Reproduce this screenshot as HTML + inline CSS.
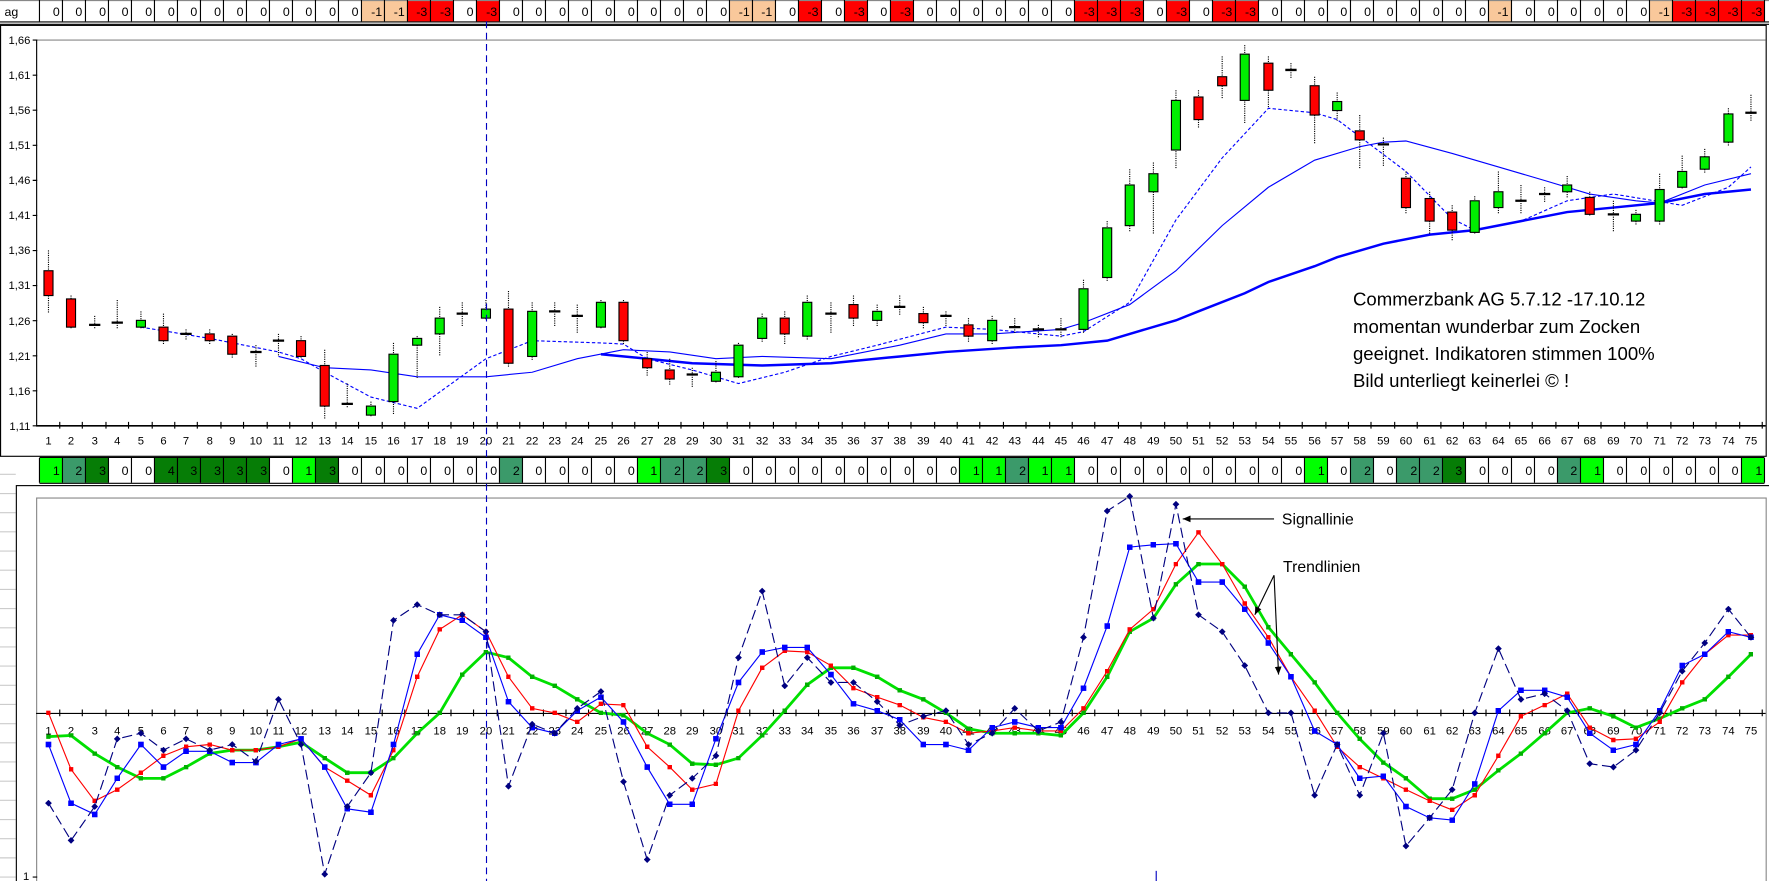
<!DOCTYPE html>
<html><head><meta charset="utf-8"><style>
html,body{margin:0;padding:0;background:#fff;overflow:hidden}
svg{display:block}
text{font-family:"Liberation Sans",Arial,sans-serif}
</style></head><body>
<svg width="1769" height="881" viewBox="0 0 1569 781" preserveAspectRatio="none" xmlns="http://www.w3.org/2000/svg">
<defs>
<marker id="md" markerWidth="6" markerHeight="6" refX="3" refY="3" markerUnits="userSpaceOnUse"><path d="M3 0L6 3L3 6L0 3Z" fill="#000080"/></marker>
<marker id="mb" markerWidth="5" markerHeight="5" refX="2.5" refY="2.5" markerUnits="userSpaceOnUse"><rect width="5" height="5" fill="#0000ff"/></marker>
<marker id="mr" markerWidth="4" markerHeight="4" refX="2" refY="2" markerUnits="userSpaceOnUse"><rect width="4" height="4" fill="#ff0000"/></marker>
<marker id="mg" markerWidth="4" markerHeight="4" refX="2" refY="2" markerUnits="userSpaceOnUse"><rect width="4" height="4" fill="#00b000"/></marker>
<marker id="ah" markerWidth="8" markerHeight="8" refX="7" refY="4" orient="auto" markerUnits="userSpaceOnUse"><path d="M0 1L7 4L0 7Z" fill="#000"/></marker>
</defs>
<rect width="1569" height="781" fill="#fff"/>

<!-- TOP BAR -->
<g font-size="11" text-anchor="end" stroke-width="0">
<rect x="0" y="0" width="1569" height="19" fill="#fff"/>
<text x="4" y="14" text-anchor="start">ag</text>
<g fill="#f9c89b">
<rect x="320.6" y="0" width="40.8" height="19"/><rect x="647" y="0" width="40.8" height="19"/><rect x="1320" y="0" width="20.4" height="19"/><rect x="1463" y="0" width="20.4" height="19"/>
</g>
<g fill="#ff0000">
<rect x="361.4" y="0" width="40.8" height="19"/><rect x="422.6" y="0" width="20.4" height="19"/>
<rect x="708.2" y="0" width="20.4" height="19"/><rect x="749" y="0" width="20.4" height="19"/><rect x="789.8" y="0" width="20.4" height="19"/>
<rect x="953" y="0" width="61.2" height="19"/><rect x="1034.6" y="0" width="20.4" height="19"/><rect x="1075.4" y="0" width="40.8" height="19"/>
<rect x="1483.4" y="0" width="81.6" height="19"/>
</g>
<g stroke="#000" stroke-width="1">
<line x1="0" y1="0.5" x2="1569" y2="0.5" stroke="#888"/>
<line x1="35" y1="0" x2="35" y2="19"/>
<path d="M55.4 0V19M75.8 0V19M96.2 0V19M116.6 0V19M137 0V19M157.4 0V19M177.8 0V19M198.2 0V19M218.6 0V19M239 0V19M259.4 0V19M279.8 0V19M300.2 0V19M320.6 0V19M341 0V19M361.4 0V19M381.8 0V19M402.2 0V19M422.6 0V19M443 0V19M463.4 0V19M483.8 0V19M504.2 0V19M524.6 0V19M545 0V19M565.4 0V19M585.8 0V19M606.2 0V19M626.6 0V19M647 0V19M667.4 0V19M687.8 0V19M708.2 0V19M728.6 0V19M749 0V19M769.4 0V19M789.8 0V19M810.2 0V19M830.6 0V19M851 0V19M871.4 0V19M891.8 0V19M912.2 0V19M932.6 0V19M953 0V19M973.4 0V19M993.8 0V19M1014.2 0V19M1034.6 0V19M1055 0V19M1075.4 0V19M1095.8 0V19M1116.2 0V19M1136.6 0V19M1157 0V19M1177.4 0V19M1197.8 0V19M1218.2 0V19M1238.6 0V19M1259 0V19M1279.4 0V19M1299.8 0V19M1320.2 0V19M1340.6 0V19M1361 0V19M1381.4 0V19M1401.8 0V19M1422.2 0V19M1442.6 0V19M1463 0V19M1483.4 0V19M1503.8 0V19M1524.2 0V19M1544.6 0V19M1565 0V19"/>
<line x1="0" y1="19.5" x2="1569" y2="19.5"/><line x1="0" y1="21.5" x2="1569" y2="21.5"/>
</g>
<g fill="#000">
<text x="53" y="14">0</text><text x="73" y="14">0</text><text x="94" y="14">0</text><text x="114" y="14">0</text><text x="135" y="14">0</text><text x="155" y="14">0</text><text x="175" y="14">0</text><text x="196" y="14">0</text><text x="216" y="14">0</text><text x="237" y="14">0</text><text x="257" y="14">0</text><text x="277" y="14">0</text><text x="298" y="14">0</text><text x="318" y="14">0</text>
<text x="339" y="14">-1</text><text x="359" y="14">-1</text><text x="379" y="14">-3</text><text x="400" y="14">-3</text><text x="420" y="14">0</text><text x="441" y="14">-3</text>
<text x="461" y="14">0</text><text x="481" y="14">0</text><text x="502" y="14">0</text><text x="522" y="14">0</text><text x="543" y="14">0</text><text x="563" y="14">0</text><text x="583" y="14">0</text><text x="604" y="14">0</text><text x="624" y="14">0</text><text x="645" y="14">0</text>
<text x="665" y="14">-1</text><text x="685" y="14">-1</text><text x="706" y="14">0</text><text x="726" y="14">-3</text><text x="747" y="14">0</text><text x="767" y="14">-3</text><text x="787" y="14">0</text><text x="808" y="14">-3</text>
<text x="828" y="14">0</text><text x="849" y="14">0</text><text x="869" y="14">0</text><text x="889" y="14">0</text><text x="910" y="14">0</text><text x="930" y="14">0</text><text x="951" y="14">0</text>
<text x="971" y="14">-3</text><text x="991" y="14">-3</text><text x="1012" y="14">-3</text><text x="1032" y="14">0</text><text x="1053" y="14">-3</text><text x="1073" y="14">0</text><text x="1093" y="14">-3</text><text x="1114" y="14">-3</text>
<text x="1134" y="14">0</text><text x="1155" y="14">0</text><text x="1175" y="14">0</text><text x="1195" y="14">0</text><text x="1216" y="14">0</text><text x="1236" y="14">0</text><text x="1257" y="14">0</text><text x="1277" y="14">0</text><text x="1297" y="14">0</text><text x="1318" y="14">0</text>
<text x="1338" y="14">-1</text><text x="1359" y="14">0</text><text x="1379" y="14">0</text><text x="1399" y="14">0</text><text x="1420" y="14">0</text><text x="1440" y="14">0</text><text x="1461" y="14">0</text>
<text x="1481" y="14">-1</text><text x="1501" y="14">-3</text><text x="1522" y="14">-3</text><text x="1542" y="14">-3</text><text x="1563" y="14">-3</text>
</g>
</g>

<!-- CHART 1 -->
<rect x="0.5" y="22.5" width="1566" height="382" fill="none" stroke="#000"/>
<line x1="32" y1="35.5" x2="1566" y2="35.5" stroke="#888"/>
<line x1="32.5" y1="35" x2="32.5" y2="377" stroke="#000"/>
<line x1="32" y1="377.5" x2="1566" y2="377.5" stroke="#000" stroke-width="1.5"/>
<g font-size="10" text-anchor="end">
<text x="27" y="39">1,66</text><text x="27" y="70">1,61</text><text x="27" y="101">1,56</text><text x="27" y="132">1,51</text><text x="27" y="163">1,46</text><text x="27" y="194">1,41</text><text x="27" y="225">1,36</text><text x="27" y="256">1,31</text><text x="27" y="288">1,26</text><text x="27" y="319">1,21</text><text x="27" y="350">1,16</text><text x="27" y="381">1,11</text>
</g>
<path d="M29 35.5h4M29 66.6h4M29 97.7h4M29 128.8h4M29 159.9h4M29 191h4M29 222.1h4M29 253.2h4M29 284.3h4M29 315.4h4M29 346.5h4M29 377.5h4" stroke="#000"/>
<path d="M53 374v6M73 374v6M94 374v6M114 374v6M135 374v6M155 374v6M175 374v6M196 374v6M216 374v6M237 374v6M257 374v6M277 374v6M298 374v6M318 374v6M339 374v6M359 374v6M380 374v6M400 374v6M420 374v6M441 374v6M461 374v6M482 374v6M502 374v6M522 374v6M543 374v6M563 374v6M584 374v6M604 374v6M624 374v6M645 374v6M665 374v6M686 374v6M706 374v6M726 374v6M747 374v6M767 374v6M788 374v6M808 374v6M829 374v6M849 374v6M869 374v6M890 374v6M910 374v6M931 374v6M951 374v6M971 374v6M992 374v6M1012 374v6M1033 374v6M1053 374v6M1073 374v6M1094 374v6M1114 374v6M1135 374v6M1155 374v6M1176 374v6M1196 374v6M1216 374v6M1237 374v6M1257 374v6M1278 374v6M1298 374v6M1318 374v6M1339 374v6M1359 374v6M1380 374v6M1400 374v6M1420 374v6M1441 374v6M1461 374v6M1482 374v6M1502 374v6M1522 374v6M1543 374v6M1563 374v6" stroke="#000"/>
<g font-size="10" text-anchor="middle">
<text x="43" y="394">1</text><text x="63" y="394">2</text><text x="84" y="394">3</text><text x="104" y="394">4</text><text x="125" y="394">5</text><text x="145" y="394">6</text><text x="165" y="394">7</text><text x="186" y="394">8</text><text x="206" y="394">9</text><text x="227" y="394">10</text><text x="247" y="394">11</text><text x="267" y="394">12</text><text x="288" y="394">13</text><text x="308" y="394">14</text><text x="329" y="394">15</text><text x="349" y="394">16</text><text x="370" y="394">17</text><text x="390" y="394">18</text><text x="410" y="394">19</text><text x="431" y="394">20</text><text x="451" y="394">21</text><text x="472" y="394">22</text><text x="492" y="394">23</text><text x="512" y="394">24</text><text x="533" y="394">25</text><text x="553" y="394">26</text><text x="574" y="394">27</text><text x="594" y="394">28</text><text x="614" y="394">29</text><text x="635" y="394">30</text><text x="655" y="394">31</text><text x="676" y="394">32</text><text x="696" y="394">33</text><text x="716" y="394">34</text><text x="737" y="394">35</text><text x="757" y="394">36</text><text x="778" y="394">37</text><text x="798" y="394">38</text><text x="819" y="394">39</text><text x="839" y="394">40</text><text x="859" y="394">41</text><text x="880" y="394">42</text><text x="900" y="394">43</text><text x="921" y="394">44</text><text x="941" y="394">45</text><text x="961" y="394">46</text><text x="982" y="394">47</text><text x="1002" y="394">48</text><text x="1023" y="394">49</text><text x="1043" y="394">50</text><text x="1063" y="394">51</text><text x="1084" y="394">52</text><text x="1104" y="394">53</text><text x="1125" y="394">54</text><text x="1145" y="394">55</text><text x="1166" y="394">56</text><text x="1186" y="394">57</text><text x="1206" y="394">58</text><text x="1227" y="394">59</text><text x="1247" y="394">60</text><text x="1268" y="394">61</text><text x="1288" y="394">62</text><text x="1308" y="394">63</text><text x="1329" y="394">64</text><text x="1349" y="394">65</text><text x="1370" y="394">66</text><text x="1390" y="394">67</text><text x="1410" y="394">68</text><text x="1431" y="394">69</text><text x="1451" y="394">70</text><text x="1472" y="394">71</text><text x="1492" y="394">72</text><text x="1512" y="394">73</text><text x="1533" y="394">74</text><text x="1553" y="394">75</text>
</g>

<!-- moving averages -->
<polyline fill="none" stroke="#0000ff" stroke-width="2.2" points="533,314 574,318 614,322 676,324 737,322 798,316 839,312 900,308 941,306 982,302 1002,296 1043,284 1063,276 1104,260 1125,250 1166,236 1186,228 1227,216 1268,208 1308,204 1349,196 1390,188 1431,184 1472,180 1512,172 1553,168"/>
<polyline fill="none" stroke="#0000ff" stroke-width="1" points="247,316 288,326 329,328 370,334 410,334 431,334 472,330 512,318 553,310 594,312 635,318 676,316 737,318 798,306 839,296 880,296 941,292 961,286 1002,270 1043,240 1084,200 1125,166 1166,142 1206,130 1227,126 1247,125 1288,136 1329,148 1370,160 1410,172 1451,178 1472,180 1512,164 1553,154"/>
<polyline fill="none" stroke="#0000ff" stroke-width="1" stroke-dasharray="3,2" points="125,290 186,300 247,312 267,318 288,330 329,352 370,362 431,318 472,302 533,304 553,305 574,318 614,328 655,340 696,330 737,316 778,306 839,290 880,292 941,298 961,294 1002,268 1043,195 1084,140 1125,96 1166,100 1186,106 1247,152 1288,194 1308,204 1349,196 1390,178 1431,172 1492,182 1533,166 1553,148"/>

<!-- candles -->
<g stroke="#000" stroke-width="1">
<path stroke-dasharray="1,1" d="M43 222V278M63 262V292M84 280V292M104 266V292M125 276V292M145 278V306M165 292V302M186 292V306M206 296V318M227 306V326M247 296V316M267 298V318M288 310V372M308 340V362M329 356V370M349 304V368M370 298V336M390 272V316M410 268V290M431 266V284M451 258V326M472 268V320M492 268V290M512 270V296M533 266V292M553 266V306M574 312V334M594 318V342M614 326V344M635 320V340M655 304V336M676 278V304M696 276V306M716 262V302M737 268V296M757 262V290M778 270V290M798 262V280M819 272V292M839 276V290M859 282V304M880 280V306M900 282V296M921 288V300M941 282V300M961 248V296M982 196V250M1002 150V206M1023 144V208M1043 80V150M1063 80V114M1084 50V88M1104 40V110M1125 50V96M1145 56V70M1166 68V128M1186 82V108M1206 102V150M1227 122V148M1247 152V190M1268 170V208M1288 182V214M1308 174V208M1329 152V190M1349 164V190M1370 166V180M1390 156V176M1410 170V192M1431 178V206M1451 186V200M1472 154V200M1492 138V168M1512 132V154M1533 96V130M1553 84V108"/>
<g fill="#ff0000">
<rect x="39" y="240" width="8" height="22"/><rect x="59" y="265" width="8" height="25"/><rect x="141" y="290" width="8" height="12"/><rect x="182" y="296" width="8" height="6"/><rect x="202" y="298" width="8" height="16"/><rect x="263" y="302" width="8" height="14"/><rect x="284" y="324" width="8" height="36"/><rect x="447" y="274" width="8" height="48"/><rect x="549" y="268" width="8" height="34"/><rect x="570" y="318" width="8" height="8"/><rect x="590" y="328" width="8" height="8"/><rect x="692" y="282" width="8" height="14"/><rect x="753" y="270" width="8" height="12"/><rect x="815" y="278" width="8" height="8"/><rect x="855" y="288" width="8" height="10"/><rect x="1059" y="86" width="8" height="20"/><rect x="1080" y="68" width="8" height="8"/><rect x="1121" y="56" width="8" height="24"/><rect x="1162" y="76" width="8" height="26"/><rect x="1202" y="116" width="8" height="8"/><rect x="1243" y="158" width="8" height="26"/><rect x="1264" y="176" width="8" height="20"/><rect x="1284" y="188" width="8" height="16"/><rect x="1406" y="175" width="8" height="15"/>
</g>
<g fill="#00ee00">
<rect x="121" y="284" width="8" height="6"/><rect x="325" y="360" width="8" height="8"/><rect x="345" y="314" width="8" height="42"/><rect x="366" y="300" width="8" height="6"/><rect x="386" y="282" width="8" height="14"/><rect x="427" y="274" width="8" height="8"/><rect x="468" y="276" width="8" height="40"/><rect x="529" y="268" width="8" height="22"/><rect x="631" y="330" width="8" height="8"/><rect x="651" y="306" width="8" height="28"/><rect x="672" y="282" width="8" height="18"/><rect x="712" y="268" width="8" height="30"/><rect x="774" y="276" width="8" height="8"/><rect x="876" y="284" width="8" height="18"/><rect x="957" y="256" width="8" height="36"/><rect x="978" y="202" width="8" height="44"/><rect x="998" y="164" width="8" height="36"/><rect x="1019" y="154" width="8" height="16"/><rect x="1039" y="89" width="8" height="44"/><rect x="1100" y="48" width="8" height="41"/><rect x="1182" y="90" width="8" height="8"/><rect x="1304" y="178" width="8" height="28"/><rect x="1325" y="170" width="8" height="14"/><rect x="1386" y="164" width="8" height="6"/><rect x="1447" y="190" width="8" height="6"/><rect x="1468" y="168" width="8" height="28"/><rect x="1488" y="152" width="8" height="14"/><rect x="1508" y="139" width="8" height="11"/><rect x="1529" y="101" width="8" height="25"/>
</g>
<path stroke-width="2" d="M79 288h10M99 286h10M160 296h10M222 312h10M242 302h10M303 358h10M405 278h10M487 276h10M507 280h10M609 332h10M732 278h10M793 272h10M834 280h10M895 290h10M916 292h10M936 292h10M1140 62h10M1222 128h10M1344 178h10M1365 172h10M1426 190h10M1548 100h10"/>
</g>

<g font-size="16.5" fill="#000">
<text x="1200" y="271">Commerzbank AG 5.7.12 -17.10.12</text>
<text x="1200" y="295">momentan wunderbar zum Zocken</text>
<text x="1200" y="319">geeignet. Indikatoren stimmen 100%</text>
<text x="1200" y="343">Bild unterliegt keinerlei © !</text>
</g>

<!-- SECOND BAR -->
<g stroke="#ccc"><path d="M0 420.5h14M0 437.5h14M0 454.5h14M0 471.5h14M0 488.5h14M0 505.5h14M0 522.5h14M0 539.5h14M0 556.5h14M0 573.5h14M0 590.5h14M0 607.5h14M0 624.5h14M0 641.5h14M0 658.5h14M0 675.5h14M0 692.5h14M0 709.5h14M0 726.5h14M0 743.5h14M0 760.5h14M0 777.5h14"/></g>
<g>
<g fill="#00ff00"><rect x="35" y="406" width="20.4" height="22"/><rect x="259.4" y="406" width="20.4" height="22"/><rect x="565.4" y="406" width="20.4" height="22"/><rect x="851" y="406" width="40.8" height="22"/><rect x="912.2" y="406" width="40.8" height="22"/><rect x="1157" y="406" width="20.4" height="22"/><rect x="1401.8" y="406" width="20.4" height="22"/><rect x="1544.6" y="406" width="20.4" height="22"/></g>
<g fill="#3b9a6a"><rect x="55.4" y="406" width="20.4" height="22"/><rect x="443" y="406" width="20.4" height="22"/><rect x="585.8" y="406" width="40.8" height="22"/><rect x="891.8" y="406" width="20.4" height="22"/><rect x="1197.8" y="406" width="20.4" height="22"/><rect x="1238.6" y="406" width="40.8" height="22"/><rect x="1381.4" y="406" width="20.4" height="22"/></g>
<g fill="#067d06"><rect x="75.8" y="406" width="20.4" height="22"/><rect x="137" y="406" width="102" height="22"/><rect x="279.8" y="406" width="20.4" height="22"/><rect x="626.6" y="406" width="20.4" height="22"/><rect x="1279.4" y="406" width="20.4" height="22"/></g>
<g stroke="#000"><line x1="35" y1="405.5" x2="1565" y2="405.5"/><line x1="35" y1="428.5" x2="1565" y2="428.5"/>
<path d="M35 406V428M55.4 406V428M75.8 406V428M96.2 406V428M116.6 406V428M137 406V428M157.4 406V428M177.8 406V428M198.2 406V428M218.6 406V428M239 406V428M259.4 406V428M279.8 406V428M300.2 406V428M320.6 406V428M341 406V428M361.4 406V428M381.8 406V428M402.2 406V428M422.6 406V428M443 406V428M463.4 406V428M483.8 406V428M504.2 406V428M524.6 406V428M545 406V428M565.4 406V428M585.8 406V428M606.2 406V428M626.6 406V428M647 406V428M667.4 406V428M687.8 406V428M708.2 406V428M728.6 406V428M749 406V428M769.4 406V428M789.8 406V428M810.2 406V428M830.6 406V428M851 406V428M871.4 406V428M891.8 406V428M912.2 406V428M932.6 406V428M953 406V428M973.4 406V428M993.8 406V428M1014.2 406V428M1034.6 406V428M1055 406V428M1075.4 406V428M1095.8 406V428M1116.2 406V428M1136.6 406V428M1157 406V428M1177.4 406V428M1197.8 406V428M1218.2 406V428M1238.6 406V428M1259 406V428M1279.4 406V428M1299.8 406V428M1320.2 406V428M1340.6 406V428M1361 406V428M1381.4 406V428M1401.8 406V428M1422.2 406V428M1442.6 406V428M1463 406V428M1483.4 406V428M1503.8 406V428M1524.2 406V428M1544.6 406V428M1565 406V428"/></g>
<g font-size="11" text-anchor="end">
<text x="53" y="421">1</text><text x="73" y="421">2</text><text x="94" y="421">3</text><text x="114" y="421">0</text><text x="135" y="421">0</text><text x="155" y="421">4</text><text x="175" y="421">3</text><text x="196" y="421">3</text><text x="216" y="421">3</text><text x="237" y="421">3</text><text x="257" y="421">0</text><text x="277" y="421">1</text><text x="298" y="421">3</text><text x="318" y="421">0</text><text x="339" y="421">0</text><text x="359" y="421">0</text><text x="379" y="421">0</text><text x="400" y="421">0</text><text x="420" y="421">0</text><text x="441" y="421">0</text><text x="461" y="421">2</text><text x="481" y="421">0</text><text x="502" y="421">0</text><text x="522" y="421">0</text><text x="543" y="421">0</text><text x="563" y="421">0</text><text x="583" y="421">1</text><text x="604" y="421">2</text><text x="624" y="421">2</text><text x="645" y="421">3</text><text x="665" y="421">0</text><text x="685" y="421">0</text><text x="706" y="421">0</text><text x="726" y="421">0</text><text x="747" y="421">0</text><text x="767" y="421">0</text><text x="787" y="421">0</text><text x="808" y="421">0</text><text x="828" y="421">0</text><text x="849" y="421">0</text><text x="869" y="421">1</text><text x="889" y="421">1</text><text x="910" y="421">2</text><text x="930" y="421">1</text><text x="951" y="421">1</text><text x="971" y="421">0</text><text x="991" y="421">0</text><text x="1012" y="421">0</text><text x="1032" y="421">0</text><text x="1053" y="421">0</text><text x="1073" y="421">0</text><text x="1093" y="421">0</text><text x="1114" y="421">0</text><text x="1134" y="421">0</text><text x="1155" y="421">0</text><text x="1175" y="421">1</text><text x="1195" y="421">0</text><text x="1216" y="421">2</text><text x="1236" y="421">0</text><text x="1257" y="421">2</text><text x="1277" y="421">2</text><text x="1297" y="421">3</text><text x="1318" y="421">0</text><text x="1338" y="421">0</text><text x="1359" y="421">0</text><text x="1379" y="421">0</text><text x="1399" y="421">2</text><text x="1420" y="421">1</text><text x="1440" y="421">0</text><text x="1461" y="421">0</text><text x="1481" y="421">0</text><text x="1501" y="421">0</text><text x="1522" y="421">0</text><text x="1542" y="421">0</text><text x="1563" y="421">1</text>
</g>
</g>

<!-- CHART 2 -->
<rect x="14.5" y="430.5" width="1560" height="360" fill="none" stroke="#000"/>
<rect x="32.5" y="441.5" width="1534" height="340" fill="none" stroke="#888"/>
<line x1="32" y1="632.5" x2="1566" y2="632.5" stroke="#000"/>
<path d="M53 629v6M73 629v6M94 629v6M114 629v6M135 629v6M155 629v6M175 629v6M196 629v6M216 629v6M237 629v6M257 629v6M277 629v6M298 629v6M318 629v6M339 629v6M359 629v6M380 629v6M400 629v6M420 629v6M441 629v6M461 629v6M482 629v6M502 629v6M522 629v6M543 629v6M563 629v6M584 629v6M604 629v6M624 629v6M645 629v6M665 629v6M686 629v6M706 629v6M726 629v6M747 629v6M767 629v6M788 629v6M808 629v6M829 629v6M849 629v6M869 629v6M890 629v6M910 629v6M931 629v6M951 629v6M971 629v6M992 629v6M1012 629v6M1033 629v6M1053 629v6M1073 629v6M1094 629v6M1114 629v6M1135 629v6M1155 629v6M1176 629v6M1196 629v6M1216 629v6M1237 629v6M1257 629v6M1278 629v6M1298 629v6M1318 629v6M1339 629v6M1359 629v6M1380 629v6M1400 629v6M1420 629v6M1441 629v6M1461 629v6M1482 629v6M1502 629v6M1522 629v6M1543 629v6M1563 629v6" stroke="#000"/>
<text x="26" y="780" font-size="10" text-anchor="end">1</text>
<path d="M29 777.5h4" stroke="#000"/>
<g font-size="10" text-anchor="middle">
<text x="43" y="651">1</text><text x="63" y="651">2</text><text x="84" y="651">3</text><text x="104" y="651">4</text><text x="125" y="651">5</text><text x="145" y="651">6</text><text x="165" y="651">7</text><text x="186" y="651">8</text><text x="206" y="651">9</text><text x="227" y="651">10</text><text x="247" y="651">11</text><text x="267" y="651">12</text><text x="288" y="651">13</text><text x="308" y="651">14</text><text x="329" y="651">15</text><text x="349" y="651">16</text><text x="370" y="651">17</text><text x="390" y="651">18</text><text x="410" y="651">19</text><text x="431" y="651">20</text><text x="451" y="651">21</text><text x="472" y="651">22</text><text x="492" y="651">23</text><text x="512" y="651">24</text><text x="533" y="651">25</text><text x="553" y="651">26</text><text x="574" y="651">27</text><text x="594" y="651">28</text><text x="614" y="651">29</text><text x="635" y="651">30</text><text x="655" y="651">31</text><text x="676" y="651">32</text><text x="696" y="651">33</text><text x="716" y="651">34</text><text x="737" y="651">35</text><text x="757" y="651">36</text><text x="778" y="651">37</text><text x="798" y="651">38</text><text x="819" y="651">39</text><text x="839" y="651">40</text><text x="859" y="651">41</text><text x="880" y="651">42</text><text x="900" y="651">43</text><text x="921" y="651">44</text><text x="941" y="651">45</text><text x="961" y="651">46</text><text x="982" y="651">47</text><text x="1002" y="651">48</text><text x="1023" y="651">49</text><text x="1043" y="651">50</text><text x="1063" y="651">51</text><text x="1084" y="651">52</text><text x="1104" y="651">53</text><text x="1125" y="651">54</text><text x="1145" y="651">55</text><text x="1166" y="651">56</text><text x="1186" y="651">57</text><text x="1206" y="651">58</text><text x="1227" y="651">59</text><text x="1247" y="651">60</text><text x="1268" y="651">61</text><text x="1288" y="651">62</text><text x="1308" y="651">63</text><text x="1329" y="651">64</text><text x="1349" y="651">65</text><text x="1370" y="651">66</text><text x="1390" y="651">67</text><text x="1410" y="651">68</text><text x="1431" y="651">69</text><text x="1451" y="651">70</text><text x="1472" y="651">71</text><text x="1492" y="651">72</text><text x="1512" y="651">73</text><text x="1533" y="651">74</text><text x="1553" y="651">75</text>
</g>

<polyline fill="none" stroke="#00e000" stroke-width="2.5" marker-start="url(#mg)" marker-mid="url(#mg)" marker-end="url(#mg)" points="43,653 63,652 84,668 104,680 125,690 145,690 165,680 186,668 206,665 227,665 247,662 267,658 288,672 308,685 329,685 349,672 370,650 390,632 410,598 431,578 451,583 472,600 492,608 512,620 533,632 553,634 574,650 594,660 614,677 635,678 655,672 676,652 696,630 716,607 737,592 757,592 778,600 798,612 819,620 839,632 859,646 880,650 900,650 921,650 941,652 961,632 982,600 1002,560 1023,548 1043,518 1063,500 1084,500 1104,520 1125,556 1145,580 1166,605 1186,632 1206,655 1227,676 1247,690 1268,708 1288,708 1308,700 1329,683 1349,668 1370,650 1390,632 1410,628 1431,635 1451,645 1472,637 1492,628 1512,620 1533,600 1553,580"/>
<polyline fill="none" stroke="#ff0000" stroke-width="1" marker-start="url(#mr)" marker-mid="url(#mr)" marker-end="url(#mr)" points="43,632 63,682 84,710 104,700 125,685 145,670 165,662 186,660 206,665 227,665 247,662 267,655 288,680 308,692 329,705 349,665 370,600 390,558 410,545 431,560 451,600 472,628 492,632 512,640 533,624 553,625 574,662 594,680 614,700 635,695 655,630 676,592 696,577 716,578 737,590 757,610 778,618 798,625 819,636 839,640 859,650 880,648 900,645 921,648 941,648 961,628 982,595 1002,558 1023,540 1043,500 1063,472 1084,500 1104,535 1125,565 1145,600 1166,630 1186,662 1206,680 1227,690 1247,700 1268,710 1288,718 1308,705 1329,670 1349,635 1370,625 1390,615 1410,645 1431,656 1451,655 1472,640 1492,605 1512,580 1533,563 1553,563"/>
<polyline fill="none" stroke="#0000ff" stroke-width="1" marker-start="url(#mb)" marker-mid="url(#mb)" marker-end="url(#mb)" points="43,660 63,712 84,722 104,690 125,660 145,680 165,666 186,666 206,676 227,676 247,660 267,655 288,680 308,717 329,720 349,660 370,580 390,545 410,550 431,565 451,622 472,645 492,650 512,630 533,618 553,640 574,680 594,713 614,713 635,655 655,605 676,578 696,574 716,574 737,598 757,624 778,630 798,638 819,660 839,660 859,665 880,645 900,640 921,645 941,645 961,610 982,555 1002,485 1023,483 1043,482 1063,516 1084,516 1104,540 1125,570 1145,600 1166,648 1186,660 1206,690 1227,688 1247,715 1268,725 1288,727 1308,695 1329,630 1349,612 1370,612 1390,618 1410,650 1431,665 1451,660 1472,630 1492,590 1512,580 1533,560 1553,565"/>
<polyline fill="none" stroke="#000080" stroke-width="1" stroke-dasharray="9,4" marker-start="url(#md)" marker-mid="url(#md)" marker-end="url(#md)" points="43,712 63,745 84,715 104,655 125,650 145,665 165,655 186,665 206,660 227,675 247,620 267,660 288,775 308,715 329,685 349,550 370,536 390,545 410,545 431,560 451,697 472,642 492,650 512,628 533,613 553,693 574,762 594,705 614,690 635,670 655,583 676,524 696,608 716,583 737,605 757,605 778,622 798,643 819,635 839,630 859,660 880,650 900,628 921,648 941,640 961,565 982,453 1002,440 1023,548 1043,447 1063,545 1084,560 1104,590 1125,632 1145,632 1166,705 1186,660 1206,705 1227,650 1247,750 1268,725 1288,700 1308,632 1329,575 1349,620 1370,615 1390,630 1410,677 1431,680 1451,665 1472,632 1492,595 1512,570 1533,540 1553,565"/>

<line x1="1130" y1="460" x2="1049" y2="460" stroke="#000" marker-end="url(#ah)"/>
<text x="1137" y="465" font-size="14">Signallinie</text>
<line x1="1130" y1="510" x2="1113" y2="545" stroke="#000" marker-end="url(#ah)"/>
<line x1="1130" y1="510" x2="1134" y2="598" stroke="#000" marker-end="url(#ah)"/>
<text x="1138" y="507" font-size="14">Trendlinien</text>

<line x1="431.5" y1="19" x2="431.5" y2="781" stroke="#0000c0" stroke-dasharray="6,4"/>
<line x1="1025.5" y1="772" x2="1025.5" y2="781" stroke="#0000c0"/>
</svg>
</body></html>
